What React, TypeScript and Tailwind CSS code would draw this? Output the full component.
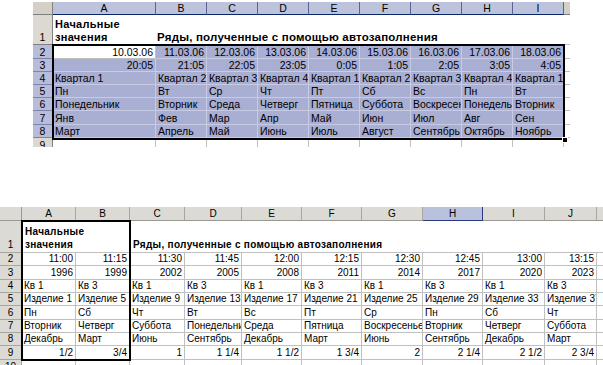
import React from 'react';

const topLetters = ['A', 'B', 'C', 'D', 'E', 'F', 'G', 'H', 'I'];
const topRows: string[][] = [
  ['10.03.06', '11.03.06', '12.03.06', '13.03.06', '14.03.06', '15.03.06', '16.03.06', '17.03.06', '18.03.06'],
  ['20:05', '21:05', '22:05', '23:05', '0:05', '1:05', '2:05', '3:05', '4:05'],
  ['Квартал 1', 'Квартал 2', 'Квартал 3', 'Квартал 4', 'Квартал 1', 'Квартал 2', 'Квартал 3', 'Квартал 4', 'Квартал 1'],
  ['Пн', 'Вт', 'Ср', 'Чт', 'Пт', 'Сб', 'Вс', 'Пн', 'Вт'],
  ['Понедельник', 'Вторник', 'Среда', 'Четверг', 'Пятница', 'Суббота', 'Воскресенье', 'Понедельник', 'Вторник'],
  ['Янв', 'Фев', 'Мар', 'Апр', 'Май', 'Июн', 'Июл', 'Авг', 'Сен'],
  ['Март', 'Апрель', 'Май', 'Июнь', 'Июль', 'Август', 'Сентябрь', 'Октябрь', 'Ноябрь'],
];
const topRight = [true, true, false, false, false, false, false];

const botLetters = ['A', 'B', 'C', 'D', 'E', 'F', 'G', 'H', 'I', 'J'];
const botRows: string[][] = [
  ['11:00', '11:15', '11:30', '11:45', '12:00', '12:15', '12:30', '12:45', '13:00', '13:15'],
  ['1996', '1999', '2002', '2005', '2008', '2011', '2014', '2017', '2020', '2023'],
  ['Кв 1', 'Кв 3', 'Кв 1', 'Кв 3', 'Кв 1', 'Кв 3', 'Кв 1', 'Кв 3', 'Кв 1', 'Кв 3'],
  ['Изделие 1', 'Изделие 5', 'Изделие 9', 'Изделие 13', 'Изделие 17', 'Изделие 21', 'Изделие 25', 'Изделие 29', 'Изделие 33', 'Изделие 37'],
  ['Пн', 'Сб', 'Чт', 'Вт', 'Вс', 'Пт', 'Ср', 'Пн', 'Сб', 'Чт'],
  ['Вторник', 'Четверг', 'Суббота', 'Понедельник', 'Среда', 'Пятница', 'Воскресенье', 'Вторник', 'Четверг', 'Суббота'],
  ['Декабрь', 'Март', 'Июнь', 'Сентябрь', 'Декабрь', 'Март', 'Июнь', 'Сентябрь', 'Декабрь', 'Март'],
  ['1/2', '3/4', '1', '1 1/4', '1 1/2', '1 3/4', '2', '2 1/4', '2 1/2', '2 3/4'],
];
const botRight = [true, true, false, false, false, false, false, true];

function TopSheet() {
  return (
    <div className="relative ml-[33px] mt-[2px] h-[145px] w-[537px] overflow-hidden text-[10.5px] text-black">
      <div className="grid grid-cols-[20px_103px_repeat(8,51px)_6px] grid-rows-[13px_30.4px_repeat(7,13.2px)_13px]">
        {/* header row */}
        <div className="border-r border-b border-[#808080] bg-[#d4d0c8]" />
        {topLetters.map((l) => (
          <div
            key={l}
            className="flex items-center justify-center border-r border-b border-r-[#5a6494] border-b-[#0a246a] bg-[#bec3dc] leading-none"
          >
            {l}
          </div>
        ))}
        <div className="border-b border-[#808080] bg-[#d4d0c8]" />

        {/* row 1 */}
        <div className="flex items-end justify-center border-r border-b border-[#808080] bg-[#dcd9d2] pb-[1px] leading-[12px]">
          1
        </div>
        <div className="flex flex-col justify-end bg-white pb-[1px] pl-[2px] text-[11px] font-bold leading-[13px] tracking-[0.3px]">
          <span>Начальные</span>
          <span>значения</span>
        </div>
        <div className="col-span-8 flex items-end overflow-hidden whitespace-nowrap bg-white pb-[1px] pl-[1px] text-[11.5px] font-bold leading-[13px] tracking-[0.2px]">
          Ряды, полученные с помощью автозаполнения
        </div>
        <div className="border-b border-[#c0c0c0] bg-white" />

        {/* rows 2-8 */}
        {topRows.map((row, ri) => (
          <React.Fragment key={ri}>
            <div className="flex items-end justify-center border-r border-b border-r-[#0a246a] border-b-[#7d84ad] bg-[#b6bcd9] leading-[12px]">
              {ri + 2}
            </div>
            {row.map((v, ci) => (
              <div
                key={ci}
                className={`flex items-end overflow-hidden whitespace-nowrap border-r border-b px-[2px] leading-[12px] ${
                  topRight[ri] ? 'justify-end' : 'justify-start'
                } ${ri === 0 && ci === 0 ? 'border-[#c0c0c0] bg-white' : 'border-[#c8cbe2] bg-[#a9aed3]'}`}
              >
                {v}
              </div>
            ))}
            <div className="border-b border-[#c0c0c0] bg-white" />
          </React.Fragment>
        ))}

        {/* row 9 partial */}
        <div className="flex items-end justify-center border-r border-[#808080] bg-[#dcd9d2] leading-[12px]">9</div>
        {topLetters.map((l) => (
          <div key={l} className="border-r border-[#c0c0c0] bg-white" />
        ))}
        <div className="bg-white" />
      </div>

      {/* selection outline */}
      <div className="pointer-events-none absolute left-[19px] top-[42.4px] h-[95.4px] w-[513px] border-2 border-black" />
      <div className="absolute left-[529px] top-[134.8px] h-[6px] w-[6px] border border-white bg-black" />
    </div>
  );
}

function BottomSheet() {
  return (
    <div className="relative mt-[60px] h-[158px] w-[603px] overflow-hidden text-[10px] text-black">
      <div className="grid grid-cols-[22px_54px_54px_55px_57px_60px_60px_61px_60px_62px_52px_6px] grid-rows-[14px_32px_repeat(9,13.33px)]">
        {/* header */}
        <div className="border-r border-b border-[#9a9890] bg-[#dcdad5]" />
        {botLetters.map((l) => (
          <div
            key={l}
            className={`flex items-center justify-center border-r border-b leading-none ${
              l === 'H'
                ? 'border-[#2a3a80] bg-[#b9c1dc]'
                : 'border-r-[#a8a69e] border-b-[#9a9890] bg-[#dcdad5]'
            }`}
          >
            {l}
          </div>
        ))}
        <div className="border-b border-[#9a9890] bg-[#dcdad5]" />

        {/* row 1 */}
        <div className="flex items-end justify-center border-r border-b border-[#a8a69e] bg-[#dcdad5] pb-[1px] leading-[12px]">
          1
        </div>
        <div className="col-span-2 flex flex-col justify-end border-b border-[#c0c0c0] bg-white pb-[1px] pl-[3px] font-bold leading-[13px] tracking-[0.3px]">
          <span>Начальные</span>
          <span>значения</span>
        </div>
        <div className="col-span-9 flex items-end overflow-hidden whitespace-nowrap border-b border-l border-b-[#c0c0c0] border-l-black bg-white pb-[1px] pl-[2px] font-bold leading-[13px] tracking-[0.3px]">
          Ряды, полученные с помощью автозаполнения
        </div>

        {/* rows 2-9 */}
        {botRows.map((row, ri) => (
          <React.Fragment key={ri}>
            <div className="flex items-end justify-center border-r border-b border-[#a8a69e] bg-[#dcdad5] leading-[12px]">
              {ri + 2}
            </div>
            {row.map((v, ci) => (
              <div
                key={ci}
                className={`flex items-end overflow-hidden whitespace-nowrap border-r border-b border-[#c0c0c0] bg-white px-[2px] leading-[12px] ${
                  botRight[ri] ? 'justify-end' : 'justify-start'
                }`}
              >
                {v}
              </div>
            ))}
            <div className="border-b border-[#c0c0c0] bg-white" />
          </React.Fragment>
        ))}

        {/* row 10 partial */}
        <div className="flex items-end justify-center border-r border-[#a8a69e] bg-[#dcdad5] leading-[12px]">10</div>
        {botLetters.map((l) => (
          <div key={l} className="border-r border-[#c0c0c0] bg-white" />
        ))}
        <div className="bg-white" />
      </div>

      {/* initial values outline */}
      <div className="pointer-events-none absolute left-[21px] top-[13px] h-[140.6px] w-[110px] border-2 border-black" />
    </div>
  );
}

export default function App() {
  return (
    <div className="h-[365px] w-[603px] overflow-hidden bg-white font-['Liberation_Sans',Arial,sans-serif]">
      <TopSheet />
      <BottomSheet />
    </div>
  );
}
